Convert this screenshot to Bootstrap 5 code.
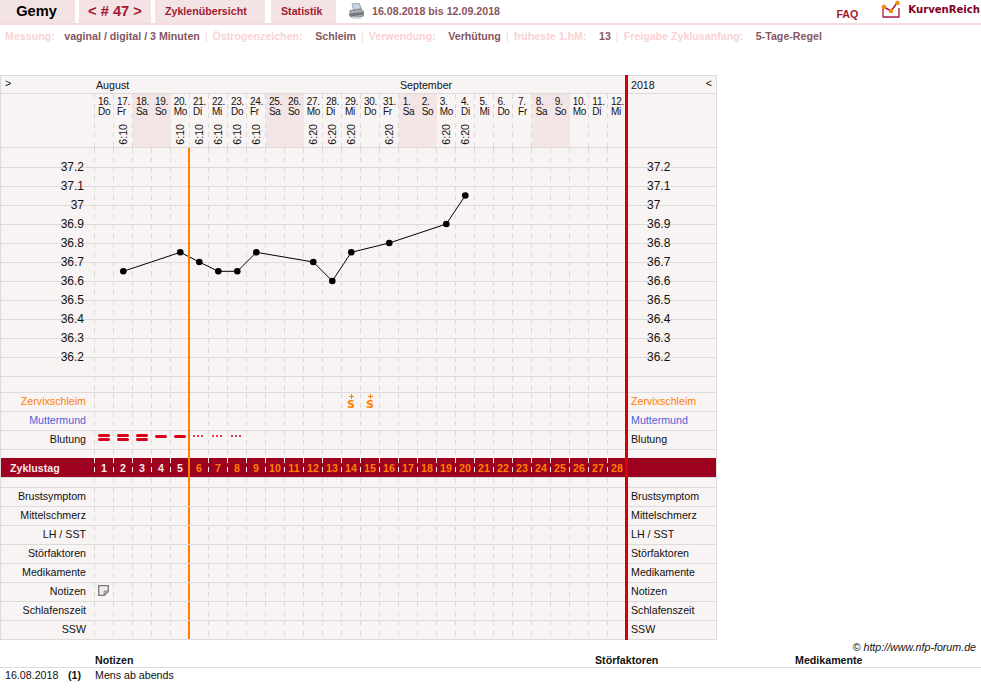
<!DOCTYPE html>
<html lang="de">
<head>
<meta charset="utf-8">
<title>Gemy</title>
<link rel="stylesheet" href="https://cdn.jsdelivr.net/npm/bootstrap@5.3.0/dist/css/bootstrap.min.css">
<style>
:root{--kbg:#f9f4f4;--kln:#dddbd9;--kor:#ff8000;--kred:#a01a30;}
body{font-family:"Liberation Sans",Arial,sans-serif;font-size:10.67px;line-height:14px;color:#111;background:#fff;}
.ktop{height:25px;border-bottom:2px solid #f3dadd;}
.ktab{background:#f3e3e5;color:var(--kred);font-weight:700;line-height:23px;margin-right:4px;text-align:center;}
.ktab-name{width:75px;color:#000;font-size:14.67px;padding-right:2px;}
.ktab-num{width:72px;font-size:14.67px;}
.ktab-a{width:110px;text-align:left;padding-left:10px;}
.ktab-b{width:65px;margin-left:2px;text-align:left;padding-left:10px;}
.kprint{margin:3px 8px 0 9px;}
.kdate{color:#8a5560;font-weight:700;line-height:23px;}
.kfaq{color:var(--kred);font-weight:700;margin:7px 23px 0 auto;}
.klogo{margin-right:0;}
.klogotxt{font-family:"DejaVu Sans",sans-serif;font-weight:700;font-size:10.1px;color:#80001c;line-height:20px;margin-left:7px;margin-right:1px;}
.kinfo{height:22px;line-height:22px;padding-left:5px;font-weight:700;color:#85565f;white-space:nowrap;margin-bottom:28px;}
.kinfo i{font-style:normal;color:#f9d2d4;}
.kinfo b{font-weight:700;color:#85565f;}
.kinfo .ksep{color:#f9d2d4;font-weight:400;margin:0 5px;}
.kv{margin-left:9.5px;}
.kv2{margin-left:12.5px;}
.kgrid{position:relative;width:717px;border:1px solid var(--kln);border-bottom:0;background:var(--kbg);}
.kgrid::after{content:"";position:absolute;left:624px;top:-1px;bottom:0;width:3px;background:#d80000;z-index:2;}
.krow{display:flex;height:19px;border-bottom:1px solid var(--kln);line-height:16px;}
.klab{flex:none;width:93px;padding-right:8px;text-align:right;white-space:nowrap;}
.kdays{flex:none;width:531px;display:flex;
  background-image:repeating-linear-gradient(to bottom,transparent 0 5px,var(--kbg) 5px 9.5px),linear-gradient(to right,var(--kln) 1px,transparent 1px);
  background-size:100% 100%,19px 100%;}
.krlab{flex:none;width:91px;padding-left:6px;white-space:nowrap;}
.korange{background-image:linear-gradient(var(--kor),var(--kor)),repeating-linear-gradient(to bottom,transparent 0 5px,var(--kbg) 5px 9.5px),linear-gradient(to right,var(--kln) 1px,transparent 1px);
  background-size:2px 100%,100% 100%,19px 100%;background-position:94px 0,0 0,0 0;background-repeat:no-repeat,repeat,repeat;}
.kc{flex:none;width:19px;}
.kmonth{height:18px;line-height:18px;}
.kmonth .kdays{background:none;}
.kmo{padding-left:2px;}
.kmo-a{width:304px;}
.karrow{padding:0 0 0 4px;line-height:14px;}
.kright{display:flex;justify-content:space-between;padding-right:4px;}
.karrow-r{line-height:14px;}
.khead{height:54px;line-height:10px;}
.khc{display:flex;flex-direction:column;align-items:center;font-size:10px;letter-spacing:-.3px;padding:3px 0 2px 2px;}
.khc .ktime{margin-top:auto;margin-left:-1px;writing-mode:vertical-rl;transform:rotate(180deg);font-size:10.67px;letter-spacing:0;line-height:12px;}
.kwe{background:linear-gradient(#f3e4e6,#f3e4e6) 1px 0/19px 100% no-repeat;}
.kwe + .kwe{background-position:0 0;box-shadow:1px 0 0 #f3e4e6;}
.kupper{position:relative;}
.kupper::after{content:"";position:absolute;left:187px;top:0;bottom:0;width:2px;background:var(--kor);z-index:1;}
.kchart{height:245px;border-bottom:1px solid var(--kln);display:flex;
  background:repeating-linear-gradient(to bottom,transparent 0 18px,var(--kln) 18px 19px) 0 1px/100% 228px no-repeat;}
.kchart .kdays{height:244px;
  background-image:repeating-linear-gradient(to bottom,transparent 0 18px,var(--kln) 18px 19px),repeating-linear-gradient(to bottom,transparent 0 5px,var(--kbg) 5px 9.5px),linear-gradient(to right,var(--kln) 1px,transparent 1px);
  background-size:100% 228px,100% 100%,19px 100%;background-position:0 1px,0 0,0 0;background-repeat:no-repeat,repeat,repeat;}
.kaxis{flex:none;padding-top:9.5px;font-size:12px;}
.kaxis div{height:19px;line-height:19px;}
.kaxis-l{width:93px;text-align:right;padding-right:10px;}
.kaxis-r{width:91px;padding-left:22px;}
.kchart svg{display:block;flex:none;}
.kor{color:var(--kor);}
.kblue{color:#4a64d8;}
.kgap1{height:8px;border-bottom:0;}
.kgap2{height:11px;border-top:1px solid var(--kln);}
.kband{background:#9e001f;color:#f6e8e8;font-weight:700;border:0;line-height:20px;}
.kband .klab{text-align:left;padding-left:9px;}
.kband .kdays{background-image:repeating-linear-gradient(to bottom,transparent 0 5px,#9e001f 5px 9.5px),linear-gradient(to right,#f6e8e8 1px,transparent 1px);}
.kband .kc{text-align:center;padding-left:1px;}
.kband .kso{color:var(--kor);}
.kbl{display:flex;flex-direction:column;padding:3px 0 0 4px;gap:1px;}
.kbar{display:block;width:12px;height:3px;border-radius:2px;background:#d80018;}
.kbar-s{margin-top:1px;}
.kdots{display:flex;gap:2px;padding:4px 0 0 4px;}
.kdots span{width:2px;height:2px;border-radius:50%;background:#d80018;}
.ksym{color:var(--kor);text-align:center;padding-left:1px;}
.kplus{display:block;width:5px;height:5px;margin:1px auto 0;background:linear-gradient(var(--kor),var(--kor)) 50% 50%/5px 1px no-repeat,linear-gradient(var(--kor),var(--kor)) 50% 50%/1px 5px no-repeat;}
.ks{display:block;font-family:"DejaVu Sans",sans-serif;font-weight:700;font-size:11px;line-height:12px;}
.knote{margin:2px 0 0 4px;display:block;}
.kcopy{height:14px;line-height:14px;text-align:right;padding-right:5px;font-style:italic;}
.kcopy span{font-style:normal;}
.knhead{font-weight:700;height:14px;line-height:12px;border-bottom:1px solid #ddd;}
.kn1{flex:none;width:95px;}
.kn2{flex:none;width:500px;}
.kn3{flex:none;width:200px;}
.kn4{flex:none;width:68px;padding-left:5px;}
.kn5{flex:none;width:27px;font-weight:700;}
.knrow{line-height:14px;}
</style>
</head>
<body class="m-0">
<div class="ktop d-flex">
  <div class="ktab ktab-name">Gemy</div>
  <div class="ktab ktab-num">&lt; # 47 &gt;</div>
  <div class="ktab ktab-a">Zyklenübersicht</div>
  <div class="ktab ktab-b">Statistik</div>
  <svg class="kprint" width="15" height="17" viewBox="0 0 15 17"><path d="M3 1 10 0l2.500 6-8 1z" fill="#c8d4e4" stroke="#7c8a99" stroke-width=".7"/><path d="M1 7.500 12 6l2.500 2v5L4 15 .5 13z" fill="#a9adb2" stroke="#6d7278" stroke-width=".7"/><path d="M1 10.500 14 9v2.500L2 13.500z" fill="#70757b"/><path d="M3 14h9v2H3z" fill="#d5d8dc"/></svg>
  <div class="kdate">16.08.2018 bis 12.09.2018</div>
  <div class="kfaq">FAQ</div>
  <svg class="klogo" width="20" height="20" viewBox="0 0 20 20"><path d="M2 8v9h16V8" fill="#fff" stroke="#a81840" stroke-width="1.300"/><path d="M3 7l7 4 6-8" fill="none" stroke="#a81840" stroke-width="1.500"/><circle cx="3" cy="7" r="2.300" fill="#f08a10"/><circle cx="10" cy="11" r="2.300" fill="#f08a10"/><circle cx="16.500" cy="3" r="2.300" fill="#f08a10"/></svg>
  <div class="klogotxt">KurvenReich</div>
</div>
<div class="kinfo"><i>Messung:</i><b class="kv">vaginal / digital / 3 Minuten</b><span class="ksep">|</span><i>Östrogenzeichen:</i><b class="kv2">Schleim</b><span class="ksep">|</span><i>Verwendung:</i><b class="kv2">Verhütung</b><span class="ksep">|</span><i>früheste 1.hM:</i><b class="kv2">13</b><span class="ksep">|</span><i>Freigabe Zyklusanfang:</i><b class="kv2">5-Tage-Regel</b></div>

<div class="kgrid">
  <div class="krow kmonth">
    <div class="klab text-start karrow">&gt;</div>
    <div class="kdays"><div class="kmo kmo-a">August</div><div class="kmo">September</div></div>
    <div class="krlab kright"><span>2018</span><span class="karrow-r">&lt;</span></div>
  </div>
  <div class="krow khead">
    <div class="klab"></div>
    <div class="kdays">
      <div class="kc khc">16.<br>Do</div>
      <div class="kc khc">17.<br>Fr<span class="ktime">6:10</span></div>
      <div class="kc khc kwe">18.<br>Sa</div>
      <div class="kc khc kwe">19.<br>So</div>
      <div class="kc khc">20.<br>Mo<span class="ktime">6:10</span></div>
      <div class="kc khc">21.<br>Di<span class="ktime">6:10</span></div>
      <div class="kc khc">22.<br>Mi<span class="ktime">6:10</span></div>
      <div class="kc khc">23.<br>Do<span class="ktime">6:10</span></div>
      <div class="kc khc">24.<br>Fr<span class="ktime">6:10</span></div>
      <div class="kc khc kwe">25.<br>Sa</div>
      <div class="kc khc kwe">26.<br>So</div>
      <div class="kc khc">27.<br>Mo<span class="ktime">6:20</span></div>
      <div class="kc khc">28.<br>Di<span class="ktime">6:20</span></div>
      <div class="kc khc">29.<br>Mi<span class="ktime">6:20</span></div>
      <div class="kc khc">30.<br>Do</div>
      <div class="kc khc">31.<br>Fr<span class="ktime">6:20</span></div>
      <div class="kc khc kwe">1.<br>Sa</div>
      <div class="kc khc kwe">2.<br>So</div>
      <div class="kc khc">3.<br>Mo<span class="ktime">6:20</span></div>
      <div class="kc khc">4.<br>Di<span class="ktime">6:20</span></div>
      <div class="kc khc">5.<br>Mi</div>
      <div class="kc khc">6.<br>Do</div>
      <div class="kc khc">7.<br>Fr</div>
      <div class="kc khc kwe">8.<br>Sa</div>
      <div class="kc khc kwe">9.<br>So</div>
      <div class="kc khc">10.<br>Mo</div>
      <div class="kc khc">11.<br>Di</div>
      <div class="kc khc">12.<br>Mi</div>
    </div>
    <div class="krlab"></div>
  </div>
  <div class="kupper">
    <div class="kchart">
      <div class="kaxis kaxis-l"><div>37.2</div><div>37.1</div><div>37</div><div>36.9</div><div>36.8</div><div>36.7</div><div>36.6</div><div>36.5</div><div>36.4</div><div>36.3</div><div>36.2</div></div>
      <div class="kdays">
        <svg width="531" height="244" viewBox="0 0 531 244">
          <polyline fill="none" stroke="#000" stroke-width="1" points="29.300,123.300 86.300,104.300 105.300,114 124.300,123.300 143.300,123.300 162.300,104.300 219.300,114 238.300,133 257.300,104.300 295.300,95 352.300,76 371.300,47.500"/>
          <g fill="#000"><circle cx="29.300" cy="123.300" r="3.300"/><circle cx="86.300" cy="104.300" r="3.300"/><circle cx="105.300" cy="114" r="3.300"/><circle cx="124.300" cy="123.300" r="3.300"/><circle cx="143.300" cy="123.300" r="3.300"/><circle cx="162.300" cy="104.300" r="3.300"/><circle cx="219.300" cy="114" r="3.300"/><circle cx="238.300" cy="133" r="3.300"/><circle cx="257.300" cy="104.300" r="3.300"/><circle cx="295.300" cy="95" r="3.300"/><circle cx="352.300" cy="76" r="3.300"/><circle cx="371.300" cy="47.500" r="3.300"/></g>
        </svg>
      </div>
      <div class="kaxis kaxis-r"><div>37.2</div><div>37.1</div><div>37</div><div>36.9</div><div>36.8</div><div>36.7</div><div>36.6</div><div>36.5</div><div>36.4</div><div>36.3</div><div>36.2</div></div>
    </div>
    <div class="krow">
      <div class="klab kor">Zervixschleim</div>
      <div class="kdays">
        <div class="kc"></div><div class="kc"></div><div class="kc"></div><div class="kc"></div><div class="kc"></div><div class="kc"></div><div class="kc"></div><div class="kc"></div><div class="kc"></div><div class="kc"></div><div class="kc"></div><div class="kc"></div><div class="kc"></div>
        <div class="kc ksym"><span class="kplus"></span><span class="ks">S</span></div>
        <div class="kc ksym"><span class="kplus"></span><span class="ks">S</span></div>
      </div>
      <div class="krlab kor">Zervixschleim</div>
    </div>
    <div class="krow">
      <div class="klab kblue">Muttermund</div>
      <div class="kdays"></div>
      <div class="krlab kblue">Muttermund</div>
    </div>
    <div class="krow">
      <div class="klab">Blutung</div>
      <div class="kdays">
        <div class="kc kbl"><span class="kbar"></span><span class="kbar"></span></div>
        <div class="kc kbl"><span class="kbar"></span><span class="kbar"></span></div>
        <div class="kc kbl"><span class="kbar"></span><span class="kbar"></span></div>
        <div class="kc kbl"><span class="kbar kbar-s"></span></div>
        <div class="kc kbl"><span class="kbar kbar-s"></span></div>
        <div class="kc kdots"><span></span><span></span><span></span></div>
        <div class="kc kdots"><span></span><span></span><span></span></div>
        <div class="kc kdots"><span></span><span></span><span></span></div>
      </div>
      <div class="krlab">Blutung</div>
    </div>
    <div class="krow kgap1"><div class="klab"></div><div class="kdays"></div></div>
    <div class="krow kband">
      <div class="klab">Zyklustag</div>
      <div class="kdays">
        <div class="kc">1</div><div class="kc">2</div><div class="kc">3</div><div class="kc">4</div><div class="kc">5</div>
        <div class="kc kso">6</div><div class="kc kso">7</div><div class="kc kso">8</div><div class="kc kso">9</div><div class="kc kso">10</div><div class="kc kso">11</div><div class="kc kso">12</div><div class="kc kso">13</div><div class="kc kso">14</div><div class="kc kso">15</div><div class="kc kso">16</div><div class="kc kso">17</div><div class="kc kso">18</div><div class="kc kso">19</div><div class="kc kso">20</div><div class="kc kso">21</div><div class="kc kso">22</div><div class="kc kso">23</div><div class="kc kso">24</div><div class="kc kso">25</div><div class="kc kso">26</div><div class="kc kso">27</div><div class="kc kso">28</div>
      </div>
    </div>
    <div class="krow kgap2"><div class="klab"></div><div class="kdays"></div></div>
  </div>
  <div class="krow"><div class="klab">Brustsymptom</div><div class="kdays korange"></div><div class="krlab">Brustsymptom</div></div>
  <div class="krow"><div class="klab">Mittelschmerz</div><div class="kdays korange"></div><div class="krlab">Mittelschmerz</div></div>
  <div class="krow"><div class="klab">LH / SST</div><div class="kdays korange"></div><div class="krlab">LH / SST</div></div>
  <div class="krow"><div class="klab">Störfaktoren</div><div class="kdays korange"></div><div class="krlab">Störfaktoren</div></div>
  <div class="krow"><div class="klab">Medikamente</div><div class="kdays korange"></div><div class="krlab">Medikamente</div></div>
  <div class="krow">
    <div class="klab">Notizen</div>
    <div class="kdays korange"><svg class="knote" width="11" height="11" viewBox="0 0 11 11"><path d="M.7.700h9.600v5.600l-4 4H.7z" fill="#eeeae8" stroke="#777" stroke-width="1.300"/><path d="M6 10V6h4z" fill="#bbb" stroke="#777" stroke-width=".6"/></svg></div>
    <div class="krlab">Notizen</div>
  </div>
  <div class="krow"><div class="klab">Schlafenszeit</div><div class="kdays korange"></div><div class="krlab">Schlafenszeit</div></div>
  <div class="krow"><div class="klab">SSW</div><div class="kdays korange"></div><div class="krlab">SSW</div></div>
</div>
<div class="kcopy"><span>©</span> http://www.nfp-forum.de</div>
<div class="d-flex knhead"><div class="kn1"></div><div class="kn2">Notizen</div><div class="kn3">Störfaktoren</div><div>Medikamente</div></div>
<div class="d-flex knrow"><div class="kn4">16.08.2018</div><div class="kn5">(1)</div><div>Mens ab abends</div></div>
<script src="https://cdn.jsdelivr.net/npm/bootstrap@5.3.0/dist/js/bootstrap.bundle.min.js"></script>
</body>
</html>
